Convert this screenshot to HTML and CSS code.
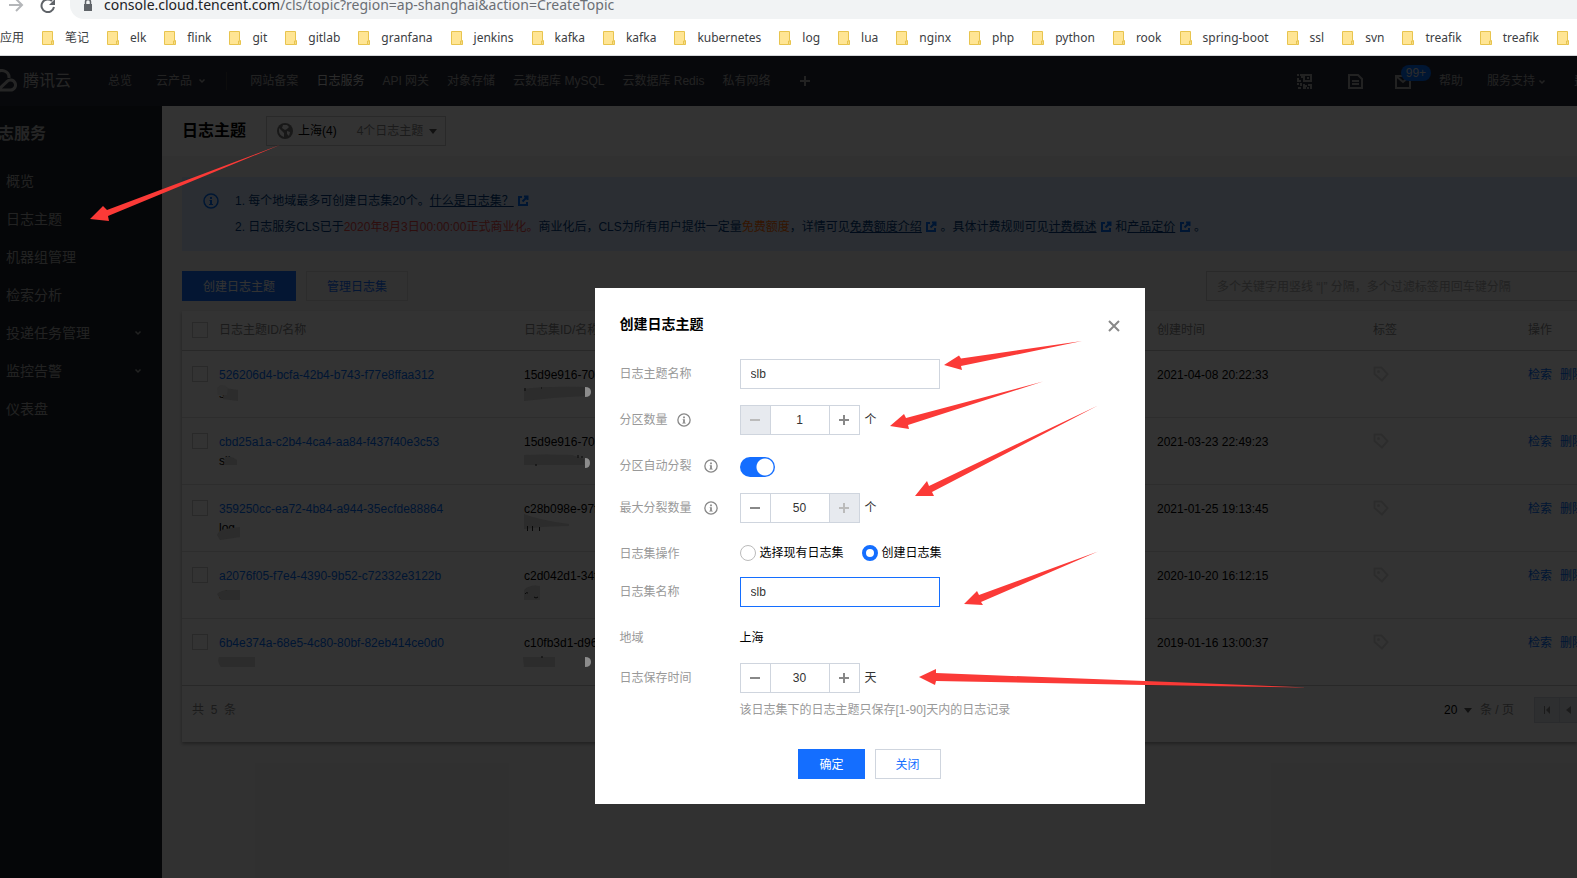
FILE: index.html
```html
<!DOCTYPE html>
<html lang="zh-CN">
<head>
  <meta charset="UTF-8">
  <meta name="viewport" content="width=device-width, initial-scale=1.0">
  <title>日志主题 - 日志服务</title>
  <link rel="stylesheet" href="styles.css">
</head>
<body>

  <!-- shared icons -->
  <svg class="sprite" aria-hidden="true">
    <symbol id="folder" viewBox="0 0 12 14">
      <path d="M.5.5h10v9h1v4H.5z" fill="#ffe594" stroke="#e8c44e"/>
      <path d="M9.500 13.500v-3.500h1.500v3.500z" fill="#fff3c8" stroke="#e8c44e"/>
    </symbol>
    <symbol id="down" viewBox="0 0 8 8">
      <path d="M1.500 2.500L4 5l2.500-2.500" fill="none" stroke="currentColor" stroke-width="1.500"/>
    </symbol>
    <symbol id="caret" viewBox="0 0 8 8">
      <path d="M0 2h8L4 7z" fill="currentColor"/>
    </symbol>
    <symbol id="info" viewBox="0 0 16 16">
      <circle cx="8" cy="8" r="7" fill="none" stroke="currentColor" stroke-width="1.500"/>
      <path d="M7 4h2v2H7zM6.500 7H9v4h1v1H6v-1h1V8h-.5z" fill="currentColor"/>
    </symbol>
    <symbol id="external" viewBox="0 0 12 12">
      <path d="M5 2H2v8h8V7M7 1.500h3.500V5M10 2L5.500 6.500" fill="none" stroke="currentColor" stroke-width="2"/>
    </symbol>
    <symbol id="tag" viewBox="0 0 16 16">
      <path d="M1.500 1.500h7L14.500 8 9 14.500 1.500 8z" fill="none" stroke="currentColor" stroke-width="2"/>
      <circle cx="5.500" cy="5.500" r="1.500" fill="currentColor"/>
    </symbol>
    <symbol id="minus" viewBox="0 0 10 10">
      <path d="M0 5h10" stroke="currentColor" stroke-width="2"/>
    </symbol>
    <symbol id="plus" viewBox="0 0 10 10">
      <path d="M0 5h10M5 0v10" stroke="currentColor" stroke-width="2"/>
    </symbol>
  </svg>

  <header class="browser">
    <div class="toolbar">
      <svg class="nav-icon" width="16" height="14" viewBox="0 0 16 14"><path d="M1 5h12M8-1l6 6-6 6" fill="none" stroke="#b4b6b9" stroke-width="2"/></svg>
      <svg class="nav-icon" width="16" height="14" viewBox="0 0 16 14"><path d="M14 7A6.300 6.300 0 1 1 12 1" fill="none" stroke="#5f6368" stroke-width="2"/><path d="M15-1v6H9z" fill="#5f6368"/></svg>
      <div class="omnibox">
        <svg width="10" height="12" viewBox="0 0 10 12"><path d="M1 4h8v7H1z" fill="#5f6368"/><path d="M2.500 4V2a2.500 2.500 0 0 1 5 0v2" fill="none" stroke="#5f6368" stroke-width="1.500"/></svg>
        <span class="url"><b>console.cloud.tencent.com</b>/cls/topic?region=ap-shanghai&amp;action=CreateTopic</span>
      </div>
    </div>
    <nav class="bookmarks">
      <a href="#">应用</a>
      <a href="#"><svg><use href="#folder"/></svg>笔记</a>
      <a href="#"><svg><use href="#folder"/></svg>elk</a>
      <a href="#"><svg><use href="#folder"/></svg>flink</a>
      <a href="#"><svg><use href="#folder"/></svg>git</a>
      <a href="#"><svg><use href="#folder"/></svg>gitlab</a>
      <a href="#"><svg><use href="#folder"/></svg>granfana</a>
      <a href="#"><svg><use href="#folder"/></svg>jenkins</a>
      <a href="#"><svg><use href="#folder"/></svg>kafka</a>
      <a href="#"><svg><use href="#folder"/></svg>kafka</a>
      <a href="#"><svg><use href="#folder"/></svg>kubernetes</a>
      <a href="#"><svg><use href="#folder"/></svg>log</a>
      <a href="#"><svg><use href="#folder"/></svg>lua</a>
      <a href="#"><svg><use href="#folder"/></svg>nginx</a>
      <a href="#"><svg><use href="#folder"/></svg>php</a>
      <a href="#"><svg><use href="#folder"/></svg>python</a>
      <a href="#"><svg><use href="#folder"/></svg>rook</a>
      <a href="#"><svg><use href="#folder"/></svg>spring-boot</a>
      <a href="#"><svg><use href="#folder"/></svg>ssl</a>
      <a href="#"><svg><use href="#folder"/></svg>svn</a>
      <a href="#"><svg><use href="#folder"/></svg>treafik</a>
      <a href="#"><svg><use href="#folder"/></svg>treafik</a>
      <a href="#" aria-label="文件夹"><svg><use href="#folder"/></svg></a>
    </nav>
  </header>

  <div class="app">
    <header class="topbar">
      <a class="logo" href="#">
        <svg width="18" height="24" viewBox="0 0 18 24"><path d="M-4 5A7 7 0 0 1 9 9M-4 21h14.500a5 5 0 1 0-4-8L-2 21" fill="none" stroke="currentColor" stroke-width="3"/></svg>
        腾讯云
      </a>
      <nav class="products">
        <a href="#">总览</a>
        <a href="#">云产品 <svg class="chevron"><use href="#down"/></svg></a>
      </nav>
      <nav class="shortcuts">
        <a href="#">网站备案</a>
        <a class="active" href="#">日志服务</a>
        <a href="#">API 网关</a>
        <a href="#">对象存储</a>
        <a href="#">云数据库 MySQL</a>
        <a href="#">云数据库 Redis</a>
        <a href="#">私有网络</a>
        <button class="add" aria-label="添加"><svg width="10" height="10"><use href="#plus"/></svg></button>
      </nav>
      <nav class="tools">
        <a class="qr" href="#" aria-label="小程序"><svg width="15" height="15" viewBox="0 0 15 15"><path d="M7 1h7v6H7zM1 0v2M1 4v3h3M3 1h2v3M0 10h2M4 9v3M1 14h3M7 10v2h3M6 14h3M11 11h4M14 12v3M11 13v2" fill="none" stroke="currentColor" stroke-width="2"/><path d="M10 3h2v2h-2z" fill="currentColor"/></svg></a>
        <a class="doc" href="#" aria-label="文档"><svg width="15" height="15" viewBox="0 0 15 15"><path d="M1 1h9l4 4v9H1zM4 7h7M4 10h7" fill="none" stroke="currentColor" stroke-width="2"/></svg></a>
        <a class="mail" href="#" aria-label="消息"><svg width="16" height="14" viewBox="0 0 16 14"><path d="M1 1h14v12H1zM1 1l7 6 7-6" fill="none" stroke="currentColor" stroke-width="2"/></svg><span class="badge">99+</span></a>
        <a href="#">帮助</a>
        <a href="#">服务支持<svg class="chevron"><use href="#down"/></svg></a>
        <a class="cost" href="#">费用</a>
      </nav>
    </header>

    <div class="body">
      <aside class="sidebar">
        <h2>日志服务</h2>
        <a href="#">概览</a>
        <a href="#">日志主题</a>
        <a href="#">机器组管理</a>
        <a href="#">检索分析</a>
        <a href="#">投递任务管理<svg class="chevron"><use href="#down"/></svg></a>
        <a href="#">监控告警<svg class="chevron"><use href="#down"/></svg></a>
        <a href="#">仪表盘</a>
      </aside>

      <main class="main">
        <div class="page-head">
          <h1>日志主题</h1>
          <button class="region">
            <svg width="16" height="16" viewBox="0 0 16 16"><circle cx="8" cy="8" r="8" fill="#777"/><path d="M2 5l5 5v4C4 13 2 11 2 8zM6 2h4l2 2-2 2-2 1-3-2zM10 8l3 1-1 4-2-2z" fill="#fff"/></svg>
            <span class="city">上海(4)</span>
            <span class="count">4个日志主题</span>
            <svg class="chevron"><use href="#caret"/></svg>
          </button>
        </div>

        <div class="content">
          <div class="notice">
            <svg class="notice-icon"><use href="#info"/></svg>
            <div>
              <p>1. 每个地域最多可创建日志集20个。<a href="#">什么是日志集？</a> <svg class="ext"><use href="#external"/></svg></p>
              <p>2. 日志服务CLS已于<span class="red">2020年8月3日00:00:00正式商业化。</span>商业化后，CLS为所有用户提供一定量<span class="orange">免费额度</span>，详情可见<a href="#">免费额度介绍</a> <svg class="ext"><use href="#external"/></svg> 。具体计费规则可见<a href="#">计费概述</a> <svg class="ext"><use href="#external"/></svg> 和<a href="#">产品定价</a> <svg class="ext"><use href="#external"/></svg> 。</p>
            </div>
          </div>

          <div class="actions">
            <button class="btn primary">创建日志主题</button>
            <button class="btn">管理日志集</button>
            <input class="search" type="text" aria-label="搜索" placeholder="多个关键字用竖线 “|” 分隔，多个过滤标签用回车键分隔">
          </div>

          <div class="card">
            <table>
              <thead>
                <tr>
                  <th class="c-check"><input type="checkbox" aria-label="全选"></th>
                  <th class="c-topic">日志主题ID/名称</th>
                  <th class="c-set">日志集ID/名称</th>
                  <th class="c-time">创建时间</th>
                  <th class="c-tag">标签</th>
                  <th class="c-ops">操作</th>
                </tr>
              </thead>
              <tbody>
                <tr>
                  <td><input type="checkbox" aria-label="选择"></td>
                  <td><a href="#">526206d4-bcfa-42b4-b743-f77e8ffaa312</a><br>slb</td>
                  <td>15d9e916-70</td>
                  <td>2021-04-08 20:22:33</td>
                  <td><svg class="tag"><use href="#tag"/></svg></td>
                  <td><a href="#">检索</a><a href="#">删除</a></td>
                </tr>
                <tr>
                  <td><input type="checkbox" aria-label="选择"></td>
                  <td><a href="#">cbd25a1a-c2b4-4ca4-aa84-f437f40e3c53</a><br>slb</td>
                  <td>15d9e916-70</td>
                  <td>2021-03-23 22:49:23</td>
                  <td><svg class="tag"><use href="#tag"/></svg></td>
                  <td><a href="#">检索</a><a href="#">删除</a></td>
                </tr>
                <tr>
                  <td><input type="checkbox" aria-label="选择"></td>
                  <td><a href="#">359250cc-ea72-4b84-a944-35ecfde88864</a><br>log</td>
                  <td>c28b098e-97f</td>
                  <td>2021-01-25 19:13:45</td>
                  <td><svg class="tag"><use href="#tag"/></svg></td>
                  <td><a href="#">检索</a><a href="#">删除</a></td>
                </tr>
                <tr>
                  <td><input type="checkbox" aria-label="选择"></td>
                  <td><a href="#">a2076f05-f7e4-4390-9b52-c72332e3122b</a><br>slb</td>
                  <td>c2d042d1-34f</td>
                  <td>2020-10-20 16:12:15</td>
                  <td><svg class="tag"><use href="#tag"/></svg></td>
                  <td><a href="#">检索</a><a href="#">删除</a></td>
                </tr>
                <tr>
                  <td><input type="checkbox" aria-label="选择"></td>
                  <td><a href="#">6b4e374a-68e5-4c80-80bf-82eb414ce0d0</a></td>
                  <td>c10fb3d1-d96</td>
                  <td>2019-01-16 13:00:37</td>
                  <td><svg class="tag"><use href="#tag"/></svg></td>
                  <td><a href="#">检索</a><a href="#">删除</a></td>
                </tr>
              </tbody>
            </table>
            <div class="pager">
              <span class="total">共&nbsp; 5&nbsp; 条</span>
              <select aria-label="每页条数"><option>20</option></select>
              <svg class="chevron"><use href="#caret"/></svg>
              <span class="per">条 / 页</span>
              <div class="pages">
                <button aria-label="首页"><svg width="8" height="8" viewBox="0 0 8 8"><path d="M1 0h1v8H1zM7 0v8L3 4z" fill="currentColor"/></svg></button>
                <button aria-label="上一页"><svg width="8" height="8" viewBox="0 0 8 8"><path d="M6 0v8L1 4z" fill="currentColor"/></svg></button>
              </div>
            </div>
          </div>
        </div>
      </main>
    </div>

    <div class="mask">
      <form class="dialog" role="dialog" aria-labelledby="dialog-title">
        <div class="dialog-head">
          <h3 id="dialog-title">创建日志主题</h3>
          <button type="button" class="close" aria-label="关闭窗口"><svg width="12" height="12" viewBox="0 0 12 12"><path d="M1 1l10 10M11 1L1 11" stroke="currentColor" stroke-width="2"/></svg></button>
        </div>

        <div class="row">
          <label for="topic">日志主题名称</label>
          <input class="text" id="topic" type="text" value="slb">
        </div>
        <div class="row">
          <label for="parts">分区数量 <svg class="tip near"><use href="#info"/></svg></label>
          <div class="stepper">
            <button type="button" disabled aria-label="减少"><svg><use href="#minus"/></svg></button>
            <input id="parts" type="text" value="1">
            <button type="button" aria-label="增加"><svg><use href="#plus"/></svg></button>
          </div>
          <span class="unit">个</span>
        </div>
        <div class="row">
          <label for="split">分区自动分裂 <svg class="tip"><use href="#info"/></svg></label>
          <input class="switch" id="split" type="checkbox" checked>
        </div>
        <div class="row">
          <label for="max">最大分裂数量 <svg class="tip"><use href="#info"/></svg></label>
          <div class="stepper">
            <button type="button" aria-label="减少"><svg><use href="#minus"/></svg></button>
            <input id="max" type="text" value="50">
            <button type="button" disabled aria-label="增加"><svg><use href="#plus"/></svg></button>
          </div>
          <span class="unit">个</span>
        </div>
        <div class="row radios">
          <span class="label">日志集操作</span>
          <label class="radio"><input type="radio" name="set">选择现有日志集</label>
          <label class="radio"><input type="radio" name="set" checked>创建日志集</label>
        </div>
        <div class="row">
          <label for="setname">日志集名称</label>
          <input class="text focus" id="setname" type="text" value="slb">
        </div>
        <div class="row">
          <span class="label">地域</span>
          <span class="value">上海</span>
        </div>
        <div class="row last">
          <label for="days">日志保存时间</label>
          <div class="stepper">
            <button type="button" aria-label="减少"><svg><use href="#minus"/></svg></button>
            <input id="days" type="text" value="30">
            <button type="button" aria-label="增加"><svg><use href="#plus"/></svg></button>
          </div>
          <span class="unit">天</span>
        </div>
        <p class="hint">该日志集下的日志主题只保存[1-90]天内的日志记录</p>

        <div class="dialog-foot">
          <button type="button" class="btn primary">确定</button>
          <button type="button" class="btn">关闭</button>
        </div>
      </form>
    </div>
  </div>

  <!-- marker arrows and blurred-out names -->
  <svg class="marks" aria-hidden="true">
    <g fill="#2c2c2c">
      <path d="M224 388l14 2v11l-15-2z"/>
      <path fill="#303030" d="M217 388q5-6 11 0l-1 7h-9z"/>
      <path d="M225 457q6-2 12 3v5h-13z"/>
      <path d="M217 535q2-5 8-6l15-2v10l-20 3z"/>
      <path d="M217 594q5-4 11-4h12v10h-19z"/>
      <path d="M219 657h36v10h-34q-4-5-2-10z"/>
      <path d="M524 389q20-3 61-2v9q-30 1-61 5z"/>
      <path d="M524 455q20-1 48 0l12 4v6h-60z"/>
      <path d="M524 514q15 6 45 10v2q-25 0-45 3z"/>
      <path d="M524 590q6-6 16-4v14h-16z"/>
      <path d="M523 657h32v10h-31z"/>
    </g>
    <path fill="#8c8c8c" d="M585 387q6 0 6 5t-6 5zM585 458q5 0 5 5t-5 5zM585 657q6 0 6 5t-6 5z"/>
    <path fill="none" stroke="#080808" d="M525 388v3M541 388h1M578 455v3M582 456v2M535 465h2M527.500 526v5M532.500 526v5M539.500 527v4M525 594q1-2 3-1M534 597q2 2 4 0M541 657h2"/>
    <g fill="#fb3a37">
      <path d="M90 219l13-13 4 4 174-65.500L108 216l1 5z"/>
      <path d="M944 365l15-9.500 2 3L1082 341 961 366l1 4z"/>
      <path d="M890 426l14-12 2 4 137-36.500L908 425l1 4z"/>
      <path d="M915 496l12-15 2 5 169-80.500L932 492l2 4z"/>
      <path d="M964 604l13-13 2 4 119-43.500L981 602l2 3z"/>
      <path d="M919 677l17-8v4l209 8 163 6.500-163-2.500-209-4-1 4z"/>
    </g>
  </svg>

</body>
</html>
```
FILE: styles.css
```css
* {
  box-sizing: border-box;
}
body {
  margin: 0;
  min-height: 100vh;
  display: flex;
  flex-direction: column;
  overflow: hidden;
  position: relative;
  font: 12px/18px "Liberation Sans", "Noto Sans CJK SC", sans-serif;
  color: #000;
}
a {
  color: inherit;
  text-decoration: none;
}
h1, h2, h3, p {
  margin: 0;
}
button, input, select {
  font: inherit;
  color: inherit;
  margin: 0;
  padding: 0;
  border: none;
  background: none;
  border-radius: 0;
}
button {
  cursor: pointer;
}
svg {
  flex: none;
}
.sprite {
  position: absolute;
  width: 0;
  height: 0;
}
.chevron {
  width: 8px;
  height: 8px;
}

/* browser */
.browser {
  font-family: "Noto Sans", "Noto Sans CJK SC", sans-serif;
  background: #fff;
  border-bottom: 1px solid #d5d7da;
}
.toolbar {
  display: flex;
  height: 19px;
  padding-left: 8px;
}
.nav-icon {
  margin-right: 16px;
}
.omnibox {
  flex: 1;
  display: flex;
  gap: 11px;
  padding-left: 13px;
  margin-left: -2px;
  background: #f1f3f4;
  border-bottom-left-radius: 14px;
}
.url {
  font-size: 14px;
  line-height: 10px;
  color: #6b6f74;
  white-space: nowrap;
}
.url b {
  font-weight: normal;
  color: #202124;
}
.bookmarks {
  display: flex;
  align-items: center;
  gap: 18px;
  height: 36px;
  padding-top: 1px;
  color: #3c4043;
  white-space: nowrap;
}
.bookmarks a {
  display: flex;
  align-items: center;
  gap: 11px;
}
.bookmarks svg {
  width: 12px;
  height: 14px;
}

/* console top bar */
.app {
  flex: 1;
  display: flex;
  flex-direction: column;
  position: relative;
}
.topbar {
  display: flex;
  align-items: center;
  height: 50px;
  background: #262b3a;
  color: #aaa;
  white-space: nowrap;
}
.logo {
  display: flex;
  align-items: center;
  gap: 5px;
  font-size: 16px;
  width: 108px;
  color: #bbb;
}
.products, .shortcuts, .tools {
  display: flex;
  align-items: center;
}
.products {
  gap: 24px;
  padding-right: 20px;
  border-right: 1px solid #444;
}
.products .chevron {
  margin-left: 3px;
}
.shortcuts {
  gap: 18px;
  padding-left: 23px;
}
.active {
  color: #ddd;
}
.add {
  margin-left: 12px;
}
.add svg {
  display: block;
}
.tools {
  margin-left: auto;
  margin-right: -21px;
  gap: 24px;
}
.tools svg {
  vertical-align: middle;
}
.qr {
  margin-right: 12px;
}
.doc {
  margin-right: 8px;
}
.mail {
  position: relative;
  margin-right: 4px;
}
.cost {
  margin-left: 4px;
}
.badge {
  position: absolute;
  left: 6px;
  top: -7px;
  width: 30px;
  line-height: 16px;
  border-radius: 8px;
  background: #006eff;
  color: #ddd;
  text-align: center;
}
.tools .chevron {
  margin-left: 3px;
}

/* sidebar */
.body {
  flex: 1;
  display: flex;
}
.sidebar {
  width: 162px;
  flex: none;
  background: #1a2028;
  color: #aaa;
  font-size: 14px;
}
.sidebar h2 {
  margin-left: -18px;
  font-size: 16px;
  line-height: 56px;
  color: #bbb;
}
.sidebar a {
  display: flex;
  align-items: center;
  justify-content: space-between;
  height: 38px;
  padding: 0 20px 0 6px;
}

/* main */
.main {
  flex: 1;
  min-width: 0;
  background: #f2f2f2;
}
.page-head {
  display: flex;
  align-items: center;
  gap: 20px;
  height: 50px;
  padding-left: 20px;
  background: #fff;
}
.page-head h1 {
  font-size: 16px;
}
.region {
  display: flex;
  align-items: center;
  height: 30px;
  padding: 0 8px 0 10px;
  border: 1px solid #ccc;
}
.city {
  margin: 0 20px 0 5px;
}
.count {
  margin-right: 6px;
  color: #888;
}
.region .chevron {
  color: #555;
}
.content {
  padding: 21px 0 0 20px;
}
.notice {
  display: flex;
  gap: 16px;
  padding: 11px 20px;
  background: #d5e7ff;
  color: #003b80;
  line-height: 26px;
  white-space: nowrap;
}
.notice a {
  text-decoration: underline;
}
.notice-icon {
  width: 16px;
  height: 16px;
  margin: 5px 0 0 1px;
  color: #006eff;
}
.ext {
  width: 12px;
  height: 12px;
  vertical-align: -2px;
  color: #006eff;
}
.red {
  color: #e54545;
}
.orange {
  color: #ff6a00;
}
.actions {
  display: flex;
  gap: 10px;
  padding: 20px 0 10px;
}
.btn {
  height: 30px;
  padding: 2px 20px 0;
  border: 1px solid #cfd5de;
  color: #146eff;
}
.actions .btn {
  border-color: #ddd;
}
.btn.primary {
  background: #146eff;
  border-color: #146eff;
  color: #fff;
}
.search {
  width: 371px;
  margin-left: auto;
  padding: 2px 10px 0;
  border: 1px solid #ccc;
  border-right: none;
}
.search::placeholder {
  color: #aaa;
}
.card {
  background: #fff;
  box-shadow: 0 2px 3px rgba(0, 0, 0, 0.3);
}
table {
  width: 100%;
  table-layout: fixed;
  border-collapse: collapse;
}
tr {
  height: 67px;
  border-bottom: 1px solid #e0e0e0;
}
thead tr, tbody tr:last-child {
  border-color: #c8c8c8;
}
thead tr {
  height: 39px;
}
th {
  padding: 0;
  font-weight: normal;
  text-align: left;
  color: #888;
}
td {
  padding: 15px 0 0;
  vertical-align: top;
  white-space: nowrap;
  line-height: 19px;
}
td a {
  color: #006eff;
}
td a + a {
  margin-left: 8px;
}
th input, td input {
  display: block;
  appearance: none;
  width: 16px;
  height: 16px;
  margin-left: 10px;
  border: 1px solid #ccc;
}
.c-check {
  width: 37px;
}
.c-topic {
  width: 305px;
}
.c-time {
  width: 216px;
}
.c-tag {
  width: 155px;
}
.c-ops {
  width: 49px;
}
.tag {
  width: 16px;
  height: 16px;
  color: #ddd;
}
.pager {
  display: flex;
  align-items: center;
  height: 56px;
  padding: 0 0 8px 10px;
  color: #888;
}
.total {
  margin-right: auto;
}
.pager select {
  appearance: none;
  width: 20px;
  color: #000;
}
.pager .chevron {
  color: #555;
}
.per {
  margin: 0 20px 0 8px;
}
.pages {
  display: flex;
}
.pages button {
  width: 26px;
  height: 26px;
  margin-right: -1px;
  background: #e7eaef;
  border: 1px solid #cfd5de;
}
.pages button:last-child {
  width: 18px;
  margin: 0;
  border-right: none;
}

/* dialog */
.mask {
  position: absolute;
  inset: 0;
  display: flex;
  justify-content: center;
  align-items: flex-start;
  padding: 232px 0 0 162px;
  background: rgba(0, 0, 0, 0.8);
}
.dialog {
  width: 550px;
  padding: 25px;
  background: #fff;
}
.dialog-head {
  display: flex;
  justify-content: space-between;
  align-items: flex-start;
  margin-bottom: 24px;
}
.dialog-head h3 {
  font-size: 14px;
  line-height: 22px;
}
.close {
  padding-top: 7px;
  color: #888;
}
.close svg {
  display: block;
}
.row {
  display: flex;
  align-items: flex-start;
  margin-bottom: 16px;
}
.row > label:first-child, .label {
  display: flex;
  width: 120px;
  padding-top: 6px;
  color: #999;
}
.tip {
  width: 14px;
  height: 14px;
  margin: 2px 0 0 12px;
  color: #888;
}
.near {
  margin-left: 9px;
}
.text {
  width: 200px;
  height: 30px;
  padding: 0 10px;
  border: 1px solid #cfd5de;
  color: #333;
}
.focus {
  border-color: #146eff;
}
.stepper {
  display: flex;
  width: 120px;
  height: 30px;
  border: 1px solid #cfd5de;
}
.stepper button {
  width: 29px;
  color: #888;
}
.stepper button:disabled {
  background: #e7eaef;
  color: #bbb;
}
.stepper svg {
  display: block;
  width: 10px;
  height: 10px;
  margin: auto;
}
.stepper input {
  flex: 1;
  min-width: 0;
  border: 1px solid #cfd5de;
  border-width: 0 1px;
  text-align: center;
  color: #333;
}
.unit {
  padding: 6px 0 0 5px;
  color: #333;
}
.switch {
  appearance: none;
  width: 35px;
  height: 20px;
  margin-top: 6px;
  border-radius: 10px;
  background: radial-gradient(circle at 25px 10px, #fff 8px, #146eff 9px);
}
.radios {
  margin-bottom: 14px;
}
.radio {
  display: flex;
  align-items: center;
  gap: 4px;
  margin-right: 18px;
  padding-top: 5px;
}
.radio input {
  appearance: none;
  width: 16px;
  height: 16px;
  border: 1px solid #bbb;
  border-radius: 50%;
}
.radio input:checked {
  border: 4px solid #146eff;
}
.value {
  padding-top: 6px;
}
.last {
  margin-bottom: 8px;
}
.hint {
  margin: 0 0 30px 120px;
  color: #999;
}
.dialog-foot {
  display: flex;
  justify-content: center;
  gap: 10px;
}

/* marks over the page */
.marks {
  position: absolute;
  inset: 0;
  width: 100%;
  height: 100%;
  pointer-events: none;
}
```
